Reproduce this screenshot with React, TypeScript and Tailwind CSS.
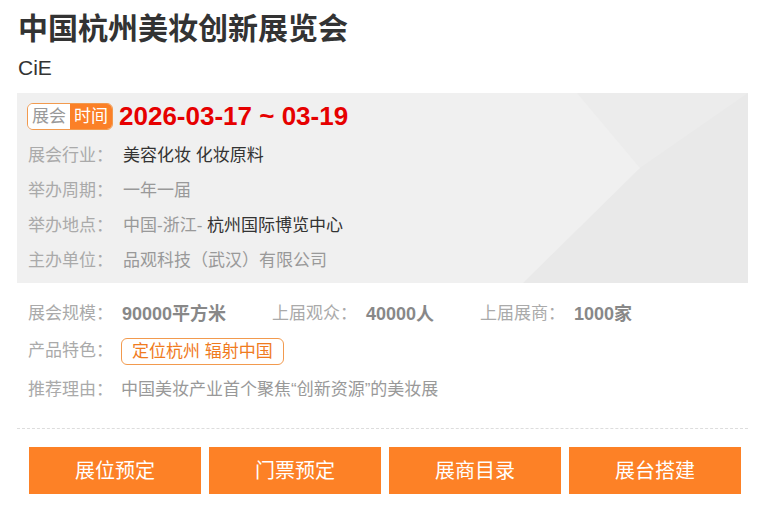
import React from "react";

const font = { fontFamily: '"Liberation Sans", "Noto Sans CJK SC", sans-serif' };

const infoRows = [
  { label: "展会行业：", parts: [{ t: "美容化妆 化妆原料", dark: true }] },
  { label: "举办周期：", parts: [{ t: "一年一届", dark: false }] },
  {
    label: "举办地点：",
    parts: [
      { t: "中国-浙江- ", dark: false },
      { t: "杭州国际博览中心", dark: true },
    ],
  },
  { label: "主办单位：", parts: [{ t: "品观科技（武汉）有限公司", dark: false }] },
];

const stats = [
  { label: "上届观众：", value: "40000人" },
  { label: "上届展商：", value: "1000家" },
];

const buttons = ["展位预定", "门票预定", "展商目录", "展台搭建"];

export default function App() {
  return (
    <div className="w-[760px] h-[514px] bg-white overflow-hidden" style={font}>
      <div className="pl-[17px] pr-[12px] pt-[10px]">
        <h1 className="pl-[1px] text-[30px] leading-[38px] font-bold text-[#333]">
          中国杭州美妆创新展览会
        </h1>
        <div className="pl-[1px] text-[21px] leading-[30px] text-[#333] mt-[5px]">CiE</div>

        {/* info panel */}
        <div className="relative mt-[10px] h-[190px] bg-[#f0f0f0] overflow-hidden">
          <svg
            className="absolute inset-0"
            width="731"
            height="190"
            viewBox="0 0 731 190"
          >
            <polygon points="560,0 731,0 731,95 623,75" fill="#ececec" />
            <polygon points="506,190 623,75 731,0 731,190" fill="#e9e9e9" />
          </svg>
          <div className="relative pl-[10px] pt-[10px]">
            <div className="flex items-center h-[27px]">
              <div className="flex h-[27px] rounded-[6px] border border-[#f29a4e] overflow-hidden text-[17px] leading-[25px]">
                <span className="bg-white text-[#999] px-[4px]">展会</span>
                <span className="bg-[#fb8027] text-white px-[4px]">时间</span>
              </div>
              <span className="ml-[6px] text-[26px] font-bold text-[#e60000] leading-[27px]">
                2026-03-17 ~ 03-19
              </span>
            </div>
            <div className="mt-[8px]">
              {infoRows.map((r) => (
                <div key={r.label} className="flex h-[35px] items-center text-[17px] pl-[1px]">
                  <span className="w-[95px] text-[#aaa]">{r.label}</span>
                  <span className="whitespace-pre">
                    {r.parts.map((p, i) => (
                      <span key={i} className={p.dark ? "text-[#333]" : "text-[#999]"}>
                        {p.t}
                      </span>
                    ))}
                  </span>
                </div>
              ))}
            </div>
          </div>
        </div>

        {/* stats */}
        <div className="pl-[11px] pt-[13px] text-[17px]">
          <div className="flex items-center h-[36px]">
            <span className="w-[94px] text-[#aaa]">展会规模：</span>
            <span className="w-[150px] font-bold text-[#888] text-[18px]">90000平方米</span>
            {stats.map((s) => (
              <React.Fragment key={s.label}>
                <span className="w-[94px] text-[#aaa]">{s.label}</span>
                <span className="w-[114px] font-bold text-[#888] text-[18px]">{s.value}</span>
              </React.Fragment>
            ))}
          </div>
          <div className="flex items-center h-[38px]">
            <span className="w-[93px] text-[#aaa]">产品特色：</span>
            <span className="h-[27px] leading-[25px] px-[10px] border border-[#f29a4e] rounded-[6px] text-[#f07b1e]">
              定位杭州 辐射中国
            </span>
          </div>
          <div className="flex items-center h-[40px]">
            <span className="w-[93px] text-[#aaa]">推荐理由：</span>
            <span className="text-[#999]">中国美妆产业首个聚焦“创新资源”的美妆展</span>
          </div>
        </div>

        <div className="mt-[18px] border-t border-dashed border-[#ddd] w-[731px]" />

        {/* buttons */}
        <div className="flex gap-[8px] pl-[12px] mt-[18px]">
          {buttons.map((b) => (
            <div
              key={b}
              className="w-[172px] h-[47px] bg-[#fd8126] text-white text-[20px] flex items-center justify-center"
            >
              {b}
            </div>
          ))}
        </div>
      </div>
    </div>
  );
}
